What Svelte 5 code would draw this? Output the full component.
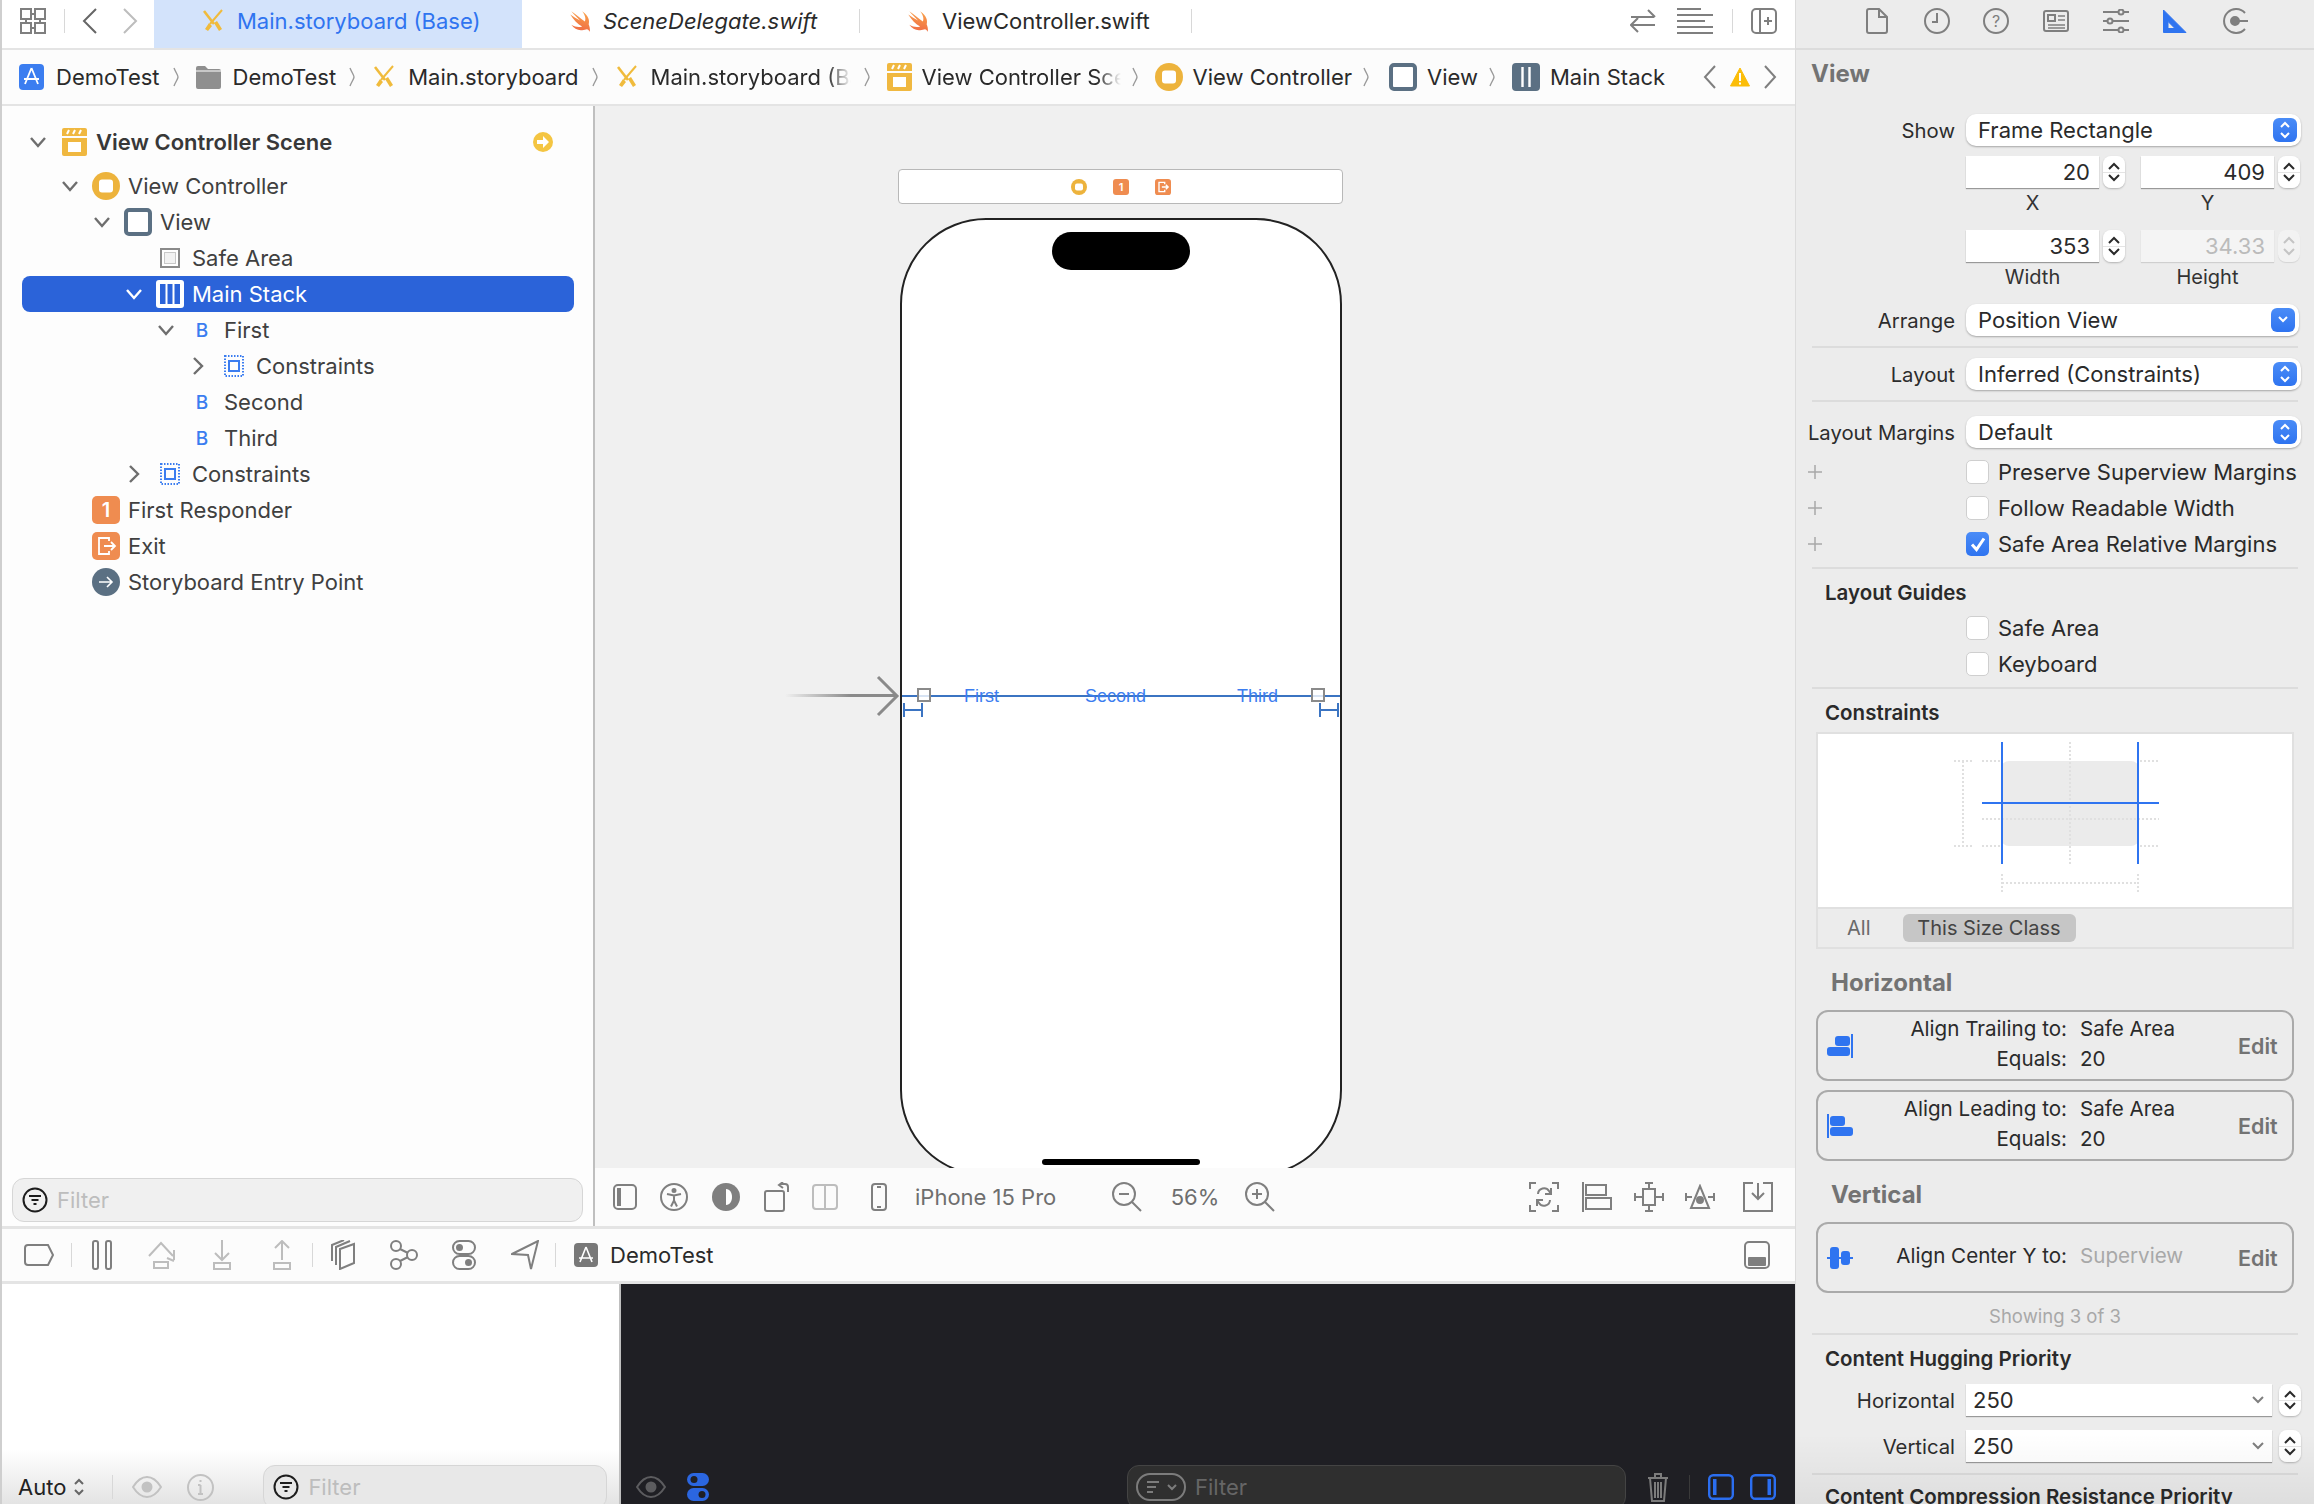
<script>
  const rows = [
    { l: 0, ch: 'd', ic: 'scene', t: 'View Controller Scene', bold: true },
    { l: 1, ch: 'd', ic: 'vc', t: 'View Controller' },
    { l: 2, ch: 'd', ic: 'view', t: 'View' },
    { l: 3, ch: '', ic: 'safe', t: 'Safe Area' },
    { l: 3, ch: 'd', ic: 'stack', t: 'Main Stack', sel: true },
    { l: 4, ch: 'd', ic: 'b', t: 'First' },
    { l: 5, ch: 'r', ic: 'cons', t: 'Constraints' },
    { l: 4, ch: '', ic: 'b', t: 'Second' },
    { l: 4, ch: '', ic: 'b', t: 'Third' },
    { l: 3, ch: 'r', ic: 'cons', t: 'Constraints' },
    { l: 1, ch: '', ic: 'one', t: 'First Responder' },
    { l: 1, ch: '', ic: 'exit', t: 'Exit' },
    { l: 1, ch: '', ic: 'entry', t: 'Storyboard Entry Point' }
  ];
</script>

{#snippet sb()}
  <svg width="24" height="24" viewBox="0 0 24 24" fill="none"><path d="M3 2 L13 15" stroke="#f0bb3c" stroke-width="2.6"/><path d="M21 1 L9 15" stroke="#f0bb3c" stroke-width="2"/><path d="M8 14 L4 20 L7 22 L11 17Z M13 14 L18 22 L21 20 L16 12Z" fill="#f0bb3c"/></svg>
{/snippet}
{#snippet swift()}
  <svg width="26" height="26" viewBox="0 0 24 24"><defs><linearGradient id="sw" x1="0.6" y1="0" x2="0.4" y2="1"><stop offset="0" stop-color="#f9a24a"/><stop offset="1" stop-color="#ef6a45"/></linearGradient></defs><path fill="url(#sw)" d="M20 15c1-3 .2-8-6-12 3 4 3.5 7 2.5 9.5C13 10 8 6 4 3c2.5 3 5.5 6 8 8.5C9 10 6 8 3 6c3 5 7 9 11 11-3 1-6.5.5-10-1.5 2.5 3.5 6 5.5 10 5 3-.3 4.5-2 6 0 .8 1 1 1.5 1 1.5 .5-2.5-.2-5-1-7z"/></svg>
{/snippet}
{#snippet sep()}
  <svg class="csep" width="6" height="20" viewBox="0 0 6 20" fill="none"><path d="M1 1 C3 6 5 8 5 10 C5 12 3 14 1 19" stroke="#9a9a9a" stroke-width="1.4"/></svg>
{/snippet}
{#snippet scene()}
  <svg width="25" height="28" viewBox="0 0 25 28"><path d="M2 0h21a2 2 0 0 1 2 2v6H0V2a2 2 0 0 1 2-2z" fill="#f0b840"/><path d="M5 6l2-4M11 6l2-4M17 6l2-4" stroke="#fff" stroke-width="2"/><path d="M0 10h25v16a2 2 0 0 1-2 2H2a2 2 0 0 1-2-2z" fill="#f0b840"/><rect x="6" y="14" width="13" height="10" fill="#fff"/></svg>
{/snippet}
{#snippet vc()}
  <svg width="28" height="28" viewBox="0 0 28 28"><circle cx="14" cy="14" r="14" fill="#edb33c"/><rect x="7" y="7.5" width="14" height="13" rx="3" fill="#fff"/></svg>
{/snippet}
{#snippet view()}
  <svg width="28" height="28" viewBox="0 0 28 28"><rect x="2" y="2" width="24" height="24" rx="3" fill="#fff" stroke="#5b7083" stroke-width="4"/></svg>
{/snippet}
{#snippet stack(c)}
  <svg width="28" height="28" viewBox="0 0 28 28"><rect x="2" y="2" width="24" height="24" rx="2" fill="#fff" stroke={c} stroke-width="4"/><rect x="4" y="4" width="20" height="20" fill={c}/><path d="M10.5 4v20M17.5 4v20" stroke="#fff" stroke-width="2.4"/></svg>
{/snippet}
{#snippet plus()}
  <span class="plus"><svg width="14" height="14" viewBox="0 0 14 14" fill="none" stroke="#a8a8a8" stroke-width="1.500"><path d="M7 0v14M0 7h14"/></svg></span>
{/snippet}
{#snippet step(dis = false)}
  <div class="stp" class:sdis={dis}>
    <svg width="14" height="10" viewBox="0 0 14 10" fill="none" stroke-width="2"><path d="M2 8l5-5 5 5"/></svg>
    <svg width="14" height="10" viewBox="0 0 14 10" fill="none" stroke-width="2"><path d="M2 2l5 5 5-5"/></svg>
  </div>
{/snippet}

<div class="app">
  <div class="main">
    <div class="tabs">
      <div class="cell"><svg width="26" height="26" viewBox="0 0 26 26" class="ic" stroke-width="1.6"><rect x="1" y="1" width="10" height="10"/><rect x="15" y="1" width="10" height="10"/><rect x="1" y="15" width="10" height="10"/><rect x="15" y="15" width="10" height="10"/><path d="M6 11v4M20 11v4M11 6h4M11 20h4"/></svg></div>
      <div class="vs"></div>
      <div class="cell"><svg width="16" height="26" viewBox="0 0 16 26" class="ic dark"><path d="M14 1L2 13l12 12"/></svg></div>
      <div class="cell"><svg width="16" height="26" viewBox="0 0 16 26" class="ic lite"><path d="M2 1l12 12L2 25"/></svg></div>
      <div></div>
      <div class="tab active">{@render sb()}<span>Main.storyboard (Base)</span></div>
      <div class="tab t2">{@render swift()}<i>SceneDelegate.swift</i></div>
      <div class="vs"></div>
      <div class="tab t3">{@render swift()}<span>ViewController.swift</span></div>
      <div class="vs"></div>
      <div></div>
      <div class="cell"><svg width="26" height="26" viewBox="0 0 26 26" class="ic"><path d="M1 9h23M18 2l7 7M25 17H2M8 10l-7 7 7 7"/></svg></div>
      <div class="cell"><svg width="36" height="26" viewBox="0 0 36 26" class="ic"><path d="M0 1h24M0 7h36M0 13h28M0 19h36M0 25h36"/></svg></div>
      <div></div>
      <div class="vs"></div>
      <div class="cell"><svg width="26" height="26" viewBox="0 0 26 26" class="ic"><rect x="1" y="1" width="24" height="24" rx="4"/><path d="M9 1v24M17 9v8M13 13h8"/></svg></div>
    </div>

    <div class="crumbs">
      <div class="crumb"><svg width="25" height="26" viewBox="0 0 25 26"><rect width="25" height="26" rx="4" fill="#3b7df0"/><path d="M12.5 4L6 20M12.5 4L19 20M5 15h15" stroke="#fff" stroke-width="1.8" fill="none"/></svg><span>DemoTest</span>{@render sep()}</div>
      <div class="crumb"><svg width="25" height="24" viewBox="0 0 25 24"><path d="M0 3a2 2 0 0 1 2-2h7l3 3h11a2 2 0 0 1 2 2v16a2 2 0 0 1-2 2H2a2 2 0 0 1-2-2z" fill="#8f8f8f"/><path d="M0 6h25" stroke="#fff"/></svg><span>DemoTest</span>{@render sep()}</div>
      <div class="crumb">{@render sb()}<span>Main.storyboard</span>{@render sep()}</div>
      <div class="crumb">{@render sb()}<span class="fade f1">Main.storyboard (Base)</span>{@render sep()}</div>
      <div class="crumb c2">{@render scene()}<span class="fade f2">View Controller Scene</span>{@render sep()}</div>
      <div class="crumb c2 c3">{@render vc()}<span>View Controller</span>{@render sep()}</div>
      <div class="crumb c2">{@render view()}<span>View</span>{@render sep()}</div>
      <div class="crumb c2">{@render stack('#5b7083')}<span>Main Stack</span></div>
      <div class="cnav">
        <svg width="14" height="24" viewBox="0 0 14 24" class="ic"><path d="M12 1L2 12l10 11"/></svg>
        <svg width="20" height="20" viewBox="0 0 20 20"><path d="M10 1L19.500 19H.5z" fill="#fbbd08" stroke="#fbbd08" stroke-linejoin="round"/><path d="M10 6v8M10 15.500v2" stroke="#fff" stroke-width="2"/></svg>
        <svg width="14" height="24" viewBox="0 0 14 24" class="ic"><path d="M2 1l10 11L2 23"/></svg>
      </div>
    </div>

    <div class="mid">
      <div class="nav">
        <div class="tree">
          {#each rows as r}
            <div class="row" class:sel={r.sel} class:bold={r.bold} class:l1={r.l === 1} class:l2={r.l === 2} class:l3={r.l === 3} class:l4={r.l === 4} class:l5={r.l === 5}>
              <div class="chev">
                {#if r.ch === 'd'}<svg width="16" height="12" viewBox="0 0 16 12" class="ic chevron"><path d="M1 2l7 8 7-8"/></svg>{/if}
                {#if r.ch === 'r'}<svg width="12" height="18" viewBox="0 0 12 18" class="ic chevron"><path d="M2 1l8 8-8 8"/></svg>{/if}
              </div>
              <div class="ricon">
                {#if r.ic === 'scene'}{@render scene()}
                {:else if r.ic === 'vc'}{@render vc()}
                {:else if r.ic === 'view'}{@render view()}
                {:else if r.ic === 'safe'}<svg width="20" height="20" viewBox="0 0 20 20"><rect x="1" y="1" width="18" height="18" fill="#fff" stroke="#8a8a8a" stroke-width="2"/><rect x="4.500" y="4.500" width="11" height="11" fill="#f2f2f2" stroke="#999" stroke-dasharray="1 1"/></svg>
                {:else if r.ic === 'stack'}<svg width="28" height="28" viewBox="0 0 28 28"><rect width="28" height="28" rx="3" fill="#fff"/><rect x="4" y="4" width="20" height="20" fill="#2b63d9"/><path d="M10.500 4v20M17.500 4v20" stroke="#fff" stroke-width="2"/></svg>
                {:else if r.ic === 'b'}<span class="bb">B</span>
                {:else if r.ic === 'cons'}<svg width="20" height="22" viewBox="0 0 20 22" fill="none"><rect x="1" y="1" width="18" height="20" stroke="#3b7df0" stroke-width="2" stroke-dasharray="1.500 1.500"/><rect x="5" y="6" width="10" height="10" stroke="#3b7df0" stroke-width="2"/></svg>
                {:else if r.ic === 'one'}<div class="sq">1</div>
                {:else if r.ic === 'exit'}<svg width="28" height="28" viewBox="0 0 28 28" fill="none"><rect width="28" height="28" rx="5" fill="#ef8c50"/><path d="M17 9V6H7v16h10v-3M12 14h11M19 10l4 4-4 4" stroke="#fff" stroke-width="1.800"/></svg>
                {:else if r.ic === 'entry'}<svg width="28" height="28" viewBox="0 0 28 28" fill="none"><circle cx="14" cy="14" r="14" fill="#5b7083"/><path d="M7 14h13M15 9l5 5-5 5" stroke="#fff" stroke-width="1.600"/></svg>
                {/if}
              </div>
              <span class="rlabel">{r.t}</span>
              {#if r.ic === 'scene'}
                <svg class="goto" width="20" height="20" viewBox="0 0 20 20"><circle cx="10" cy="10" r="10" fill="#f4c542"/><path d="M4 8h6V4l6 6-6 6v-4H4z" fill="#fff"/></svg>
              {/if}
            </div>
          {/each}
        </div>
        <div class="filterwrap">
          <div class="filter">
            <svg width="26" height="26" viewBox="0 0 26 26" fill="none" stroke="#1d1d1d" stroke-width="2"><circle cx="13" cy="13" r="11.500"/><path d="M7 9h12M9.500 13h7M11.500 17h3"/></svg>
            <span>Filter</span>
          </div>
        </div>
      </div>

      <div class="center">
        <div class="canvas">
          <div class="dock">
            <svg width="16" height="16" viewBox="0 0 16 16"><circle cx="8" cy="8" r="8" fill="#edb33c"/><rect x="4" y="4.500" width="8" height="7" rx="2" fill="#fff"/></svg>
            <div class="sq small">1</div>
            <svg width="16" height="16" viewBox="0 0 28 28" fill="none"><rect width="28" height="28" rx="5" fill="#ef8c50"/><path d="M17 9V6H7v16h10v-3M12 14h11M19 10l4 4-4 4" stroke="#fff" stroke-width="2.400"/></svg>
          </div>
          <div class="entry"></div>
          <svg class="head" width="24" height="42" viewBox="0 0 24 42" fill="none"><path d="M2 2l19 19L2 40" stroke="#8a8a8a" stroke-width="3"/></svg>
          <div class="phone">
            <div class="island"></div>
            <div class="stackline">
              <span>First</span><span class="mid2">Second</span><span>Third</span>
              <i class="handle hl"></i><i class="handle hr"></i>
              <svg class="beam bl" width="20" height="14" viewBox="0 0 20 14" fill="none" stroke="#3b74c2" stroke-width="2"><path d="M1 0v14M19 0v14M1 7h18"/></svg>
              <svg class="beam br" width="20" height="14" viewBox="0 0 20 14" fill="none" stroke="#3b74c2" stroke-width="2"><path d="M1 0v14M19 0v14M1 7h18"/></svg>
            </div>
            <div class="home"></div>
          </div>
        </div>
        <div class="cbar">
          <div class="cell"><svg width="24" height="26" viewBox="0 0 24 26" class="ic"><rect x="1" y="1" width="22" height="24" rx="4"/><rect x="4" y="4" width="4" height="18" fill="#7f7f7f" stroke="none"/></svg></div>
          <div class="cell"><svg width="28" height="28" viewBox="0 0 28 28" class="ic" stroke-width="1.600"><circle cx="14" cy="14" r="13"/><circle cx="14" cy="7.500" r="1.500" fill="#7f7f7f"/><path d="M7 11l7 1.500L21 11M14 12.500v5M14 17.500l-3 6M14 17.500l3 6"/></svg></div>
          <div class="cell"><svg width="28" height="28" viewBox="0 0 28 28"><circle cx="14" cy="14" r="14" fill="#7f7f7f"/><path d="M14 6c4 0 6 4 6 8s-2 8-6 8z" fill="#fff"/></svg></div>
          <div class="cell"><svg width="28" height="30" viewBox="0 0 28 30" class="ic"><rect x="1" y="9" width="19" height="20" rx="2"/><path d="M24 10V5a3 3 0 0 0-3-3h-5M19 0l-4 3 4 3"/></svg></div>
          <div class="cell"><svg width="26" height="26" viewBox="0 0 26 26" class="ic lite"><rect x="1" y="1" width="24" height="24" rx="3"/><path d="M13 1v24"/></svg></div>
          <div class="cell"><svg width="16" height="28" viewBox="0 0 16 28" class="ic"><rect x="1" y="1" width="14" height="26" rx="3"/><path d="M6 4h4M6 24h4"/></svg></div>
          <div class="device">iPhone 15 Pro</div>
          <div class="cell"><svg width="30" height="30" viewBox="0 0 30 30" class="ic"><circle cx="12" cy="12" r="11"/><path d="M20 20l9 9M7 12h10"/></svg></div>
          <div class="cell zoomv">56%</div>
          <div class="cell"><svg width="30" height="30" viewBox="0 0 30 30" class="ic"><circle cx="12" cy="12" r="11"/><path d="M20 20l9 9M7 12h10M12 7v10"/></svg></div>
          <div></div>
          <div class="cell"><svg width="30" height="30" viewBox="0 0 30 30" class="ic"><path d="M1 7V1h6M23 1h6v6M1 23v6h6M29 23v6h-6M9 12a6 6 0 0 1 11-3l2 3M21 18a6 6 0 0 1-11 3l-2-3M22 6v6h-6M8 24v-6h6"/></svg></div>
          <div class="cell"><svg width="30" height="30" viewBox="0 0 30 30" class="ic"><path d="M1 0v30M4 3h20v10H4zM4 16h25v11H4z"/></svg></div>
          <div class="cell"><svg width="30" height="30" viewBox="0 0 30 30" class="ic"><rect x="9" y="7" width="12" height="16"/><path d="M15 0v7M11 1h8M15 23v7M11 29h8M1 11v8M1 15h8M29 11v8M21 15h8"/></svg></div>
          <div class="cell"><svg width="30" height="26" viewBox="0 0 30 26" class="ic"><path d="M15 2L6 24h18zM1 9v8M1 13h6M29 9v8M23 13h6"/><circle cx="15" cy="16" r="3" fill="#7f7f7f"/></svg></div>
          <div class="cell"><svg width="30" height="30" viewBox="0 0 30 30" class="ic"><path d="M10 1H1v28h28V1h-9M15 1v15M9 11l6 6 6-6"/></svg></div>
        </div>
      </div>
    </div>

    <div class="dbar">
      <div class="cell first"><svg width="30" height="22" viewBox="0 0 30 22" class="ic"><path d="M4 1h20l5 10-5 10H4a3 3 0 0 1-3-3V4a3 3 0 0 1 3-3z"/></svg></div>
      <div class="vs"></div>
      <div class="cell"><svg width="20" height="30" viewBox="0 0 20 30" class="ic"><rect x="1" y="1" width="5" height="28" rx="2"/><rect x="14" y="1" width="5" height="28" rx="2"/></svg></div>
      <div class="cell"><svg width="28" height="28" viewBox="0 0 28 28" class="ic lite"><path d="M1 15L13 2l12 13M26 9v10M19 17l7 3M6 21h14v6H6z"/></svg></div>
      <div class="cell"><svg width="20" height="30" viewBox="0 0 20 30" class="ic lite"><path d="M10 0v19M3 13l7 7 7-7M2 23h16v6H2z"/></svg></div>
      <div class="cell"><svg width="20" height="30" viewBox="0 0 20 30" class="ic lite"><path d="M10 20V1M3 8l7-7 7 7M2 23h16v6H2z"/></svg></div>
      <div class="vs"></div>
      <div class="cell"><svg width="24" height="30" viewBox="0 0 24 30" class="ic" stroke-width="1.600"><path d="M9 9l14-5v19L9 29zM5 25V7l14-6M1 21V5l12-5"/></svg></div>
      <div class="cell"><svg width="28" height="30" viewBox="0 0 28 30" class="ic"><circle cx="6" cy="6" r="5"/><circle cx="22" cy="15" r="5"/><circle cx="6" cy="24" r="5"/><path d="M10 9l8 4M10 21l8-4"/></svg></div>
      <div class="cell"><svg width="24" height="30" viewBox="0 0 24 30" class="ic"><rect x="1" y="1" width="22" height="13" rx="6.500"/><rect x="1" y="16" width="22" height="13" rx="6.500"/><circle cx="7.500" cy="7.500" r="2.500" fill="#7f7f7f"/><circle cx="16.500" cy="22.500" r="2.500" fill="#7f7f7f"/></svg></div>
      <div class="cell"><svg width="28" height="30" viewBox="0 0 28 30" class="ic"><path d="M1 14L27 1l-7 28-3-14z"/></svg></div>
      <div class="vs"></div>
      <div class="dapp"><svg width="24" height="24" viewBox="0 0 24 24"><rect width="24" height="24" rx="4" fill="#787878"/><path d="M12 4L6 19M12 4l6 15M5 15h14" stroke="#fff" stroke-width="1.600" fill="none"/></svg><span>DemoTest</span></div>
      <div class="cell"><svg width="26" height="28" viewBox="0 0 26 28" class="ic"><rect x="1" y="1" width="24" height="26" rx="4"/><rect x="4" y="16" width="18" height="9" rx="1" fill="#7f7f7f" stroke="none"/></svg></div>
    </div>

    <div class="bottom">
      <div class="vars">
        <div class="vbar">
          <span class="auto">Auto</span>
          <svg width="10" height="18" viewBox="0 0 10 18" class="ic dark"><path d="M1 6l4-4 4 4M1 12l4 4 4-4"/></svg>
          <div class="vs v1"></div>
          <svg class="eye" width="30" height="22" viewBox="0 0 30 22" fill="none" stroke="#c2c2c2" stroke-width="2"><path d="M1 11C6 3 11 1 15 1s9 2 14 10c-5 8-10 10-14 10S6 19 1 11z"/><circle cx="15" cy="11" r="4.500" fill="#c2c2c2"/></svg>
          <svg class="info" width="27" height="27" viewBox="0 0 27 27" fill="none" stroke="#c2c2c2" stroke-width="2"><circle cx="13.500" cy="13.500" r="12.500"/><path d="M13.500 11v9M11 20h5M11 11h2.500M13.500 6v2"/></svg>
          <div class="filter f2b">
            <svg width="26" height="26" viewBox="0 0 26 26" fill="none" stroke="#1d1d1d" stroke-width="2"><circle cx="13" cy="13" r="11.500"/><path d="M7 9h12M9.500 13h7M11.500 17h3"/></svg>
            <span>Filter</span>
          </div>
        </div>
      </div>
      <div class="console">
        <div class="cobar">
          <svg width="30" height="22" viewBox="0 0 30 22" fill="none" stroke="#5c5c5f" stroke-width="2"><path d="M1 11C6 3 11 1 15 1s9 2 14 10c-5 8-10 10-14 10S6 19 1 11z"/><circle cx="15" cy="11" r="4.500" fill="#5c5c5f"/></svg>
          <svg class="tog" width="22" height="28" viewBox="0 0 22 28"><rect width="22" height="13" rx="6.500" fill="#2b66e0"/><rect y="15" width="22" height="13" rx="6.500" fill="#2b66e0"/><circle cx="7" cy="6.500" r="3.500" fill="#1f1f24"/><circle cx="15" cy="21.500" r="3.500" fill="#1f1f24"/></svg>
          <div class="dfilter">
            <svg width="50" height="28" viewBox="0 0 50 28" fill="none" stroke="#7c7c7c" stroke-width="2"><rect x="1" y="1" width="48" height="26" rx="13"/><path d="M11 9h12M11 14h9M11 19h6M32 12l4 4 4-4"/></svg>
            <span>Filter</span>
          </div>
          <svg class="trash" width="22" height="30" viewBox="0 0 22 30" fill="none" stroke="#7c7c7c" stroke-width="2"><path d="M1 6h20M8 6V2h6v4M3 6l2 23h12l2-23M8 10v16M11 10v16M14 10v16"/></svg>
          <div class="vs dv"></div>
          <svg class="pl" width="26" height="26" viewBox="0 0 26 26" fill="none" stroke="#2b6ef0" stroke-width="2.400"><rect x="1.200" y="1.200" width="23.600" height="23.600" rx="4"/><rect x="5" y="5" width="3.500" height="16" fill="#2b6ef0" stroke="none"/></svg>
          <svg class="pr" width="26" height="26" viewBox="0 0 26 26" fill="none" stroke="#2b6ef0" stroke-width="2.400"><rect x="1.200" y="1.200" width="23.600" height="23.600" rx="4"/><rect x="17.500" y="5" width="3.500" height="16" fill="#2b6ef0" stroke="none"/></svg>
        </div>
      </div>
    </div>
  </div>

  <div class="insp">
    <div class="ibar">
      <div class="icell"><svg width="22" height="26" viewBox="0 0 22 26" class="ic"><path d="M3 1h10l8 8v14a2 2 0 0 1-2 2H3a2 2 0 0 1-2-2V3a2 2 0 0 1 2-2zM13 1v8h8"/></svg></div>
      <div class="icell"><svg width="26" height="26" viewBox="0 0 26 26" class="ic"><circle cx="13" cy="13" r="12"/><path d="M13 5v9H8"/></svg></div>
      <div class="icell"><svg width="26" height="26" viewBox="0 0 26 26" class="ic"><circle cx="13" cy="13" r="12"/><text x="13" y="18.500" text-anchor="middle" class="qm">?</text></svg></div>
      <div class="icell"><svg width="26" height="22" viewBox="0 0 26 22" class="ic"><rect x="1" y="1" width="24" height="20" rx="2"/><rect x="5" y="5" width="7" height="6"/><path d="M15 6h7M15 10h7M5 15h17M5 18h17" stroke-width="1.500"/></svg></div>
      <div class="icell"><svg width="26" height="24" viewBox="0 0 26 24" class="ic" stroke-width="1.500"><path d="M0 3h15M21 3h5M0 12h4M10 12h16M0 21h15M21 21h5"/><circle cx="18" cy="3" r="2.500"/><circle cx="7" cy="12" r="2.500"/><circle cx="18" cy="21" r="2.500"/></svg></div>
      <div class="icell"><svg width="26" height="26" viewBox="0 0 26 26"><path d="M1.500 2v22.500H24z M6 13.500V20.500H13z" fill="#2f74f0" fill-rule="evenodd" stroke="#2f74f0" stroke-width="1"/></svg></div>
      <div class="icell"><svg width="26" height="26" viewBox="0 0 26 26" class="ic"><path d="M23 5A12 12 0 1 0 23 21M14 13h12"/><circle cx="13" cy="13" r="4" fill="#7f7f7f"/></svg></div>
    </div>

    <div class="ibody">
      <div class="ititle">View</div>

      <div class="fr mt23"><label>Show</label><div class="pop"><span>Frame Rectangle</span><b class="bt"><svg width="12" height="20" viewBox="0 0 12 20" class="wh"><path d="M2 7l4-4 4 4M2 13l4 4 4-4"/></svg></b></div></div>

      <div class="nums mt10">
        <div class="nf"><em>20</em></div>{@render step()}<div class="nf"><em>409</em></div>{@render step()}
        <div class="cap">X</div><div></div><div class="cap">Y</div><div></div>
        <div class="nf"><em>353</em></div>{@render step()}<div class="nf dis"><em>34.33</em></div>{@render step(true)}
        <div class="cap">Width</div><div></div><div class="cap">Height</div><div></div>
      </div>

      <div class="fr"><label>Arrange</label><div class="pop narrow"><span>Position View</span><b class="bt"><svg width="12" height="10" viewBox="0 0 12 10" class="wh"><path d="M2 2l4 4 4-4"/></svg></b></div></div>
      <hr class="mt10" />
      <div class="fr mt10"><label>Layout</label><div class="pop"><span>Inferred (Constraints)</span><b class="bt"><svg width="12" height="20" viewBox="0 0 12 20" class="wh"><path d="M2 7l4-4 4 4M2 13l4 4 4-4"/></svg></b></div></div>
      <hr class="mt10" />
      <div class="fr mt14"><label>Layout Margins</label><div class="pop"><span>Default</span><b class="bt"><svg width="12" height="20" viewBox="0 0 12 20" class="wh"><path d="M2 7l4-4 4 4M2 13l4 4 4-4"/></svg></b></div></div>

      <div class="ck mt12">{@render plus()}<i class="box"></i><span>Preserve Superview Margins</span></div>
      <div class="ck mt12">{@render plus()}<i class="box"></i><span>Follow Readable Width</span></div>
      <div class="ck mt12">{@render plus()}<i class="box on"><svg width="24" height="24" viewBox="0 0 24 24" fill="none" stroke="#fff" stroke-width="3"><path d="M6 12.500l4.500 5L18 6.500"/></svg></i><span>Safe Area Relative Margins</span></div>
      <hr class="mt11" />
      <div class="st mt11">Layout Guides</div>
      <div class="ck mt10"><span class="plus"></span><i class="box"></i><span>Safe Area</span></div>
      <div class="ck mt12"><span class="plus"></span><i class="box"></i><span>Keyboard</span></div>
      <hr class="mt11" />
      <div class="st mt11">Constraints</div>

      <div class="cbox">
        <div class="diagram">
          <svg width="474" height="173" viewBox="1818 734 474 173" fill="none">
            <rect x="2001" y="761" width="138" height="85" rx="8" fill="#ebebeb"/>
            <g stroke="#e0e0e0" stroke-width="2" stroke-dasharray="2 2">
              <path d="M2070 742v122M1963 761v85M1954 761h18M1982 761h18M2140 761h19M1954 846h18M1982 846h18M2140 846h19M1982 819h177M2002 883h136M2002 874v18M2138 874v18"/>
            </g>
            <path d="M2002 742v122M2138 742v122M1982 803h177" stroke="#2f74f0" stroke-width="2"/>
          </svg>
        </div>
        <div class="ctabs"><span class="all">All</span><span class="pill">This Size Class</span></div>
      </div>

      <div class="gt mt21">Horizontal</div>
      <div class="card mt14">
        <svg class="cic" width="26" height="26" viewBox="0 0 26 26"><rect x="8" y="3" width="15" height="10" rx="3" fill="#2f74f0"/><rect y="14" width="23" height="9" rx="3" fill="#2f74f0"/><path d="M25 1v24" stroke="#2f74f0" stroke-width="2"/></svg>
        <span class="ck1">Align Trailing to:</span><span class="cv">Safe Area</span><span class="edit">Edit</span>
        <span class="ck1">Equals:</span><span class="cv">20</span>
      </div>
      <div class="card mt9">
        <svg class="cic" width="26" height="26" viewBox="0 0 26 26"><rect x="3" y="3" width="15" height="10" rx="3" fill="#2f74f0"/><rect x="3" y="14" width="23" height="9" rx="3" fill="#2f74f0"/><path d="M1 1v24" stroke="#2f74f0" stroke-width="2"/></svg>
        <span class="ck1">Align Leading to:</span><span class="cv">Safe Area</span><span class="edit">Edit</span>
        <span class="ck1">Equals:</span><span class="cv">20</span>
      </div>
      <div class="gt mt21">Vertical</div>
      <div class="card one mt14">
        <svg class="cic" width="26" height="24" viewBox="0 0 26 24"><rect x="3" y="1" width="9" height="22" rx="3" fill="#2f74f0"/><rect x="14" y="5" width="9" height="14" rx="3" fill="#2f74f0"/><path d="M0 12h26" stroke="#2f74f0" stroke-width="2"/></svg>
        <span class="ck1">Align Center Y to:</span><span class="cv grey">Superview</span><span class="edit">Edit</span>
      </div>
      <div class="showing">Showing 3 of 3</div>
      <hr class="mt4" />
      <div class="st mt11">Content Hugging Priority</div>
      <div class="fr mt12"><label>Horizontal</label><div class="combo"><span>250</span><svg width="12" height="8" viewBox="0 0 12 8" class="ic"><path d="M1 1l5 5 5-5"/></svg></div><span class="g7"></span>{@render step()}</div>
      <div class="fr mt14"><label>Vertical</label><div class="combo"><span>250</span><svg width="12" height="8" viewBox="0 0 12 8" class="ic"><path d="M1 1l5 5 5-5"/></svg></div><span class="g7"></span>{@render step()}</div>
      <hr class="mt11" />
      <div class="st mt9">Content Compression Resistance Priority</div>
    </div>
  </div>
</div>

<style>
  :global(body) { margin: 0; background: #fff; }
  .app { width: 2314px; height: 1504px; overflow: hidden; display: grid; grid-template-columns: 1795px 1px 518px; font-family: Inter, "Liberation Sans", sans-serif; font-size: 22px; color: #2a2a2a; position: relative; }
  .main { display: flex; flex-direction: column; border-left: 2px solid #cfcfcf; min-width: 0; height: 1504px; }
  .insp { grid-column: 3; background: #ececec; height: 1504px; border-left: 1px solid #dcdcdc; margin-left: -1px; position: relative; overflow: hidden; }
  .insp::after { content: ""; position: absolute; left: 0; right: 0; bottom: 0; height: 70px; background: linear-gradient(transparent, rgba(0,0,0,.06)); pointer-events: none; }
  .cell { display: flex; align-items: center; justify-content: center; min-width: 0; }
  .vs { width: 1px; height: 24px; background: #d8d8d8; align-self: center; }
  .ic { fill: none; stroke: #7f7f7f; stroke-width: 2; }
  .ic.dark { stroke: #666; }
  .ic.lite { stroke: #bdbdbd; }
  .chevron { stroke: #6e6e6e; stroke-width: 2.4; }
  .tabs { height: 48px; box-sizing: content-box; display: grid; grid-template-columns: 62px 1px 49px 32px 8px 368px 337px 1px 331px 1px 1fr 52px 52px 11px 1px 62px; background: #fff; border-bottom: 2px solid #e4e4e4; flex: none; }
  .tabs > .cell, .tabs > .tab { padding-bottom: 6px; box-sizing: border-box; }
  .tabs > .vs { align-self: start; margin-top: 9px; }
  .tab { display: flex; align-items: center; gap: 12px; padding-left: 47px; min-width: 0; overflow: hidden; white-space: nowrap; }
  .tab.t2 { padding-left: 45px; gap: 10px; }
  .tab.t3 { padding-left: 45px; gap: 11px; }
  .tab i { font-style: italic; }
  .tab.active { background: #d3e3fb; color: #2f74f0; }
  .crumbs { height: 54px; display: flex; align-items: center; padding-left: 17px; background: #fcfcfc; border-bottom: 2px solid #e4e4e4; flex: none; }
  .crumb { display: flex; align-items: center; gap: 12px; white-space: nowrap; margin-right: 17px; }
  .crumb.c2 { gap: 10px; }
  .crumb.c3 { margin-right: 20px; }
  .csep { margin-left: 1px; }
  .fade { overflow: hidden; display: block; }
  .f1 { width: 200px; -webkit-mask-image: linear-gradient(90deg, #000 88%, transparent); mask-image: linear-gradient(90deg, #000 88%, transparent); }
  .f2 { width: 199px; -webkit-mask-image: linear-gradient(90deg, #000 88%, transparent); mask-image: linear-gradient(90deg, #000 88%, transparent); }
  .cnav { margin-left: auto; margin-right: 18px; display: flex; align-items: center; gap: 13px; }
  .mid { height: 1120px; display: flex; flex: none; }
  .nav { width: 591px; flex: none; border-right: 2px solid #bfbfbf; box-sizing: content-box; background: #fdfdfd; display: flex; flex-direction: column; }
  .tree { flex: 1; padding: 18px 19px 0 20px; }
  .row { height: 36px; display: flex; align-items: center; color: #404040; position: relative; border-radius: 8px; white-space: nowrap; }
  .row.bold { font-weight: 600; color: #383838; margin-bottom: 8px; }
  .row.sel { background: #2b63d9; color: #fff; }
  .row.sel .chevron { stroke: #fff; }
  .l1 { padding-left: 32px; } .l2 { padding-left: 64px; } .l3 { padding-left: 96px; } .l4 { padding-left: 128px; } .l5 { padding-left: 160px; }
  .chev { width: 32px; display: flex; justify-content: center; flex: none; }
  .ricon { width: 32px; margin-left: 4px; margin-right: 6px; display: flex; justify-content: center; align-items: center; flex: none; }
  .bb { color: #3b7df0; font-size: 19px; font-weight: 500; }
  .sq { width: 28px; height: 28px; border-radius: 5px; background: #ef8c50; color: #fff; font-weight: 600; font-size: 20px; display: flex; align-items: center; justify-content: center; }
  .sq.small { width: 16px; height: 16px; font-size: 11px; border-radius: 3px; }
  .goto { position: absolute; right: 21px; top: 8px; }
  .filterwrap { padding: 0 10px 4px 10px; }
  .filter { height: 44px; box-sizing: border-box; border: 1.5px solid #d6d6d6; border-radius: 12px; background: #f0f0f0; display: flex; align-items: center; gap: 9px; padding-left: 9px; color: #bdbdbd; }
  .center { flex: 1; display: flex; flex-direction: column; min-width: 0; }
  .canvas { height: 1062px; background: #f0f0f0; position: relative; overflow: hidden; flex: none; }
  .dock { position: absolute; left: 303px; top: 63px; width: 445px; height: 35px; box-sizing: border-box; border: 1.5px solid #b8b8b8; border-radius: 4px; background: #fff; display: flex; align-items: center; justify-content: center; gap: 26px; padding-left: 1px; }
  .phone { position: absolute; left: 305px; top: 112px; width: 442px; height: 958px; box-sizing: border-box; border: 2px solid #222; border-radius: 86px; background: #fff; }
  .island { position: absolute; left: 150px; top: 12px; width: 138px; height: 38px; border-radius: 19px; background: #000; }
  .home { position: absolute; left: 140px; top: 939px; width: 158px; height: 6px; border-radius: 3px; background: #000; }
  .stackline { position: absolute; left: 0; right: 0; top: 462px; height: 28px; display: flex; justify-content: space-between; align-items: center; padding: 0 62px; font-family: "Liberation Sans", sans-serif; font-size: 18px; color: #3b7df0; }
  .stackline::before { content: ""; position: absolute; left: 0; right: 0; top: 13px; height: 2px; background: #3b74c2; }
  .stackline span { position: relative; }
  .mid2 { margin-right: 5px; }
  .handle { position: absolute; top: 6px; width: 14px; height: 14px; box-sizing: border-box; border: 2px solid #8a8a8a; background: rgba(255,255,255,.8); }
  .hl { left: 15px; } .hr { right: 15px; }
  .beam { position: absolute; top: 21px; }
  .bl { left: 1px; } .br { right: 1px; }
  .entry { position: absolute; left: 190px; top: 588px; width: 110px; height: 3px; background: linear-gradient(90deg, transparent, #8a8a8a 60%); }
  .head { position: absolute; left: 281px; top: 569px; }
  .cbar { height: 58px; background: #fbfbfb; display: grid; grid-template-columns: 59px 40px 64px 40px 54px 54px 184px 74px 62px 68px 1fr 62px 44px 60px 42px 74px; flex: none; }
  .device { align-self: center; padding-left: 9px; color: #6e6e6e; white-space: nowrap; }
  .zoomv { color: #6e6e6e; }
  .dbar { height: 52px; border-top: 3px solid #e4e4e4; border-bottom: 3px solid #e4e4e4; background: #fcfcfc; display: grid; grid-template-columns: 69px 1px 60px 60px 60px 60px 1px 60.5px 60.5px 60.5px 60.5px 1px 1fr 76px; flex: none; }
  .cell.first { padding-left: 4px; }
  .dapp { display: flex; align-items: center; gap: 12px; padding-left: 18px; color: #2a2a2a; }
  .bottom { flex: 1; display: flex; min-height: 0; }
  .vars { width: 617px; flex: none; border-right: 2px solid #bfbfbf; background: linear-gradient(#fff 0, #fff 75%, #e4e4e4 100%); display: flex; flex-direction: column; justify-content: flex-end; }
  .vbar { display: flex; align-items: center; height: 44px; margin-bottom: -5px; padding-left: 16px; }
  .auto { margin-right: 8px; color: #222; }
  .vs.v1 { margin-left: 28px; margin-right: 19px; }
  .info { margin-left: 25px; }
  .filter.f2b { width: 344px; flex: none; margin-left: 49px; height: 44px; background: #e8e8e8; }
  .console { flex: 1; background: #1f1f24; display: flex; flex-direction: column; justify-content: flex-end; min-width: 0; }
  .cobar { display: flex; align-items: center; height: 44px; margin-bottom: -5px; padding-left: 15px; }
  .tog { margin-left: 21px; }
  .dfilter { margin-left: 418px; width: 499px; flex: none; height: 44px; box-sizing: border-box; border: 1.5px solid #444; border-radius: 12px; background: #2f2f2f; display: flex; align-items: center; gap: 9px; padding-left: 8px; color: #666; }
  .trash { margin-left: 21px; }
  .vs.dv { margin-left: 20px; background: #3a3a3a; }
  .pl { margin-left: 18px; } .pr { margin-left: 16px; }
  .ibar { height: 48px; border-bottom: 2px solid #dcdcdc; display: flex; padding-left: 51px; }
  .icell { width: 59.700px; display: flex; align-items: center; justify-content: center; flex: none; padding-bottom: 6px; box-sizing: border-box; }
  .qm { font-size: 16px; font-family: Inter, sans-serif; fill: #7f7f7f; stroke: none; }
  .ibody { padding: 0 0 0 15px; }
  .ititle { height: 34px; margin-top: 7px; line-height: 34px; font-weight: 700; font-size: 24px; color: #737373; }
  .mt4 { margin-top: 4px; } .mt9 { margin-top: 9px; } .mt10 { margin-top: 10px; } .mt11 { margin-top: 11px; } .mt12 { margin-top: 12px; } .mt14 { margin-top: 14px; } .mt21 { margin-top: 21px; } .mt23 { margin-top: 23px; }
  .fr { display: flex; align-items: center; height: 32px; }
  label { width: 144px; flex: none; text-align: right; margin-right: 11px; white-space: nowrap; direction: rtl; color: #2c2c2c; font-size: 20.300px; }
  .pop { width: 335px; height: 32px; box-sizing: border-box; background: #fff; border-radius: 10px; box-shadow: 0 1px 2px rgba(0,0,0,.3); display: flex; align-items: center; justify-content: space-between; padding: 0 4px 0 12px; }
  .pop.narrow { width: 333px; }
  .bt { width: 24px; height: 24px; border-radius: 6px; background: linear-gradient(#4a8cf7, #2f74f0); display: flex; align-items: center; justify-content: center; }
  .wh { fill: none; stroke: #fff; stroke-width: 2; }
  .nums { display: grid; grid-template-columns: 133px 42px 133px 27px; margin-left: 155px; }
  .nf { height: 32px; background: #fff; box-shadow: 0 1px 1px rgba(0,0,0,.35); text-align: right; padding-right: 9px; line-height: 32px; box-sizing: border-box; }
  .nf em { font-style: normal; }
  .nf.dis { background: #f4f4f4; color: #bbb; box-shadow: 0 1px 1px rgba(0,0,0,.12); }
  .cap { text-align: center; height: 42px; line-height: 30px; font-size: 20px; color: #333; }
  .stp { width: 22px; height: 32px; margin-left: 4px; background: linear-gradient(#fff 0 49%, #e4e4e4 49% 52%, #fff 52%); border-radius: 8px; box-shadow: 0 1px 2px rgba(0,0,0,.25); display: flex; flex-direction: column; align-items: center; justify-content: center; gap: 2px; stroke: #2a2a2a; }
  .stp.sdis { background: #f2f2f2; stroke: #c4c4c4; box-shadow: 0 1px 1px rgba(0,0,0,.1); }
  hr { border: 0; height: 2px; background: #dcdcdc; width: 486px; margin-left: 1px; margin-bottom: 0; }
  .ck { display: flex; align-items: center; height: 24px; }
  .plus { width: 155px; flex: none; margin-left: -3px; margin-right: 3px; display: flex; align-items: center; }
  .box { width: 23px; height: 24px; box-sizing: border-box; border: 1px solid #cfcfcf; border-radius: 5px; background: #fff; margin-right: 9px; flex: none; display: block; }
  .box.on { background: linear-gradient(#4a8cf7, #2f74f0); border: 0; }
  .box svg { display: block; }
  .st { height: 26px; line-height: 26px; font-weight: 600; font-size: 20.500px; margin-left: 14px; color: #2a2a2a; white-space: nowrap; }
  .cbox { margin-top: 6px; margin-left: 5px; width: 478px; box-sizing: border-box; border: 2px solid #e0e0e0; }
  .diagram { background: #fff; height: 173px; border-bottom: 2px solid #e0e0e0; }
  .diagram svg { display: block; }
  .ctabs { height: 38px; display: flex; align-items: center; background: #ececec; color: #6a6a6a; font-size: 20px; }
  .all { margin-left: 29px; margin-right: 32px; }
  .pill { background: #c6c6c6; color: #444; height: 28px; width: 173px; line-height: 28px; text-align: center; border-radius: 6px; white-space: nowrap; }
  .gt { height: 26px; line-height: 26px; margin-left: 20px; font-weight: 700; font-size: 24px; color: #737373; }
  .card { margin-left: 5px; width: 478px; height: 71px; box-sizing: border-box; border: 2px solid #aaa; border-radius: 12px; display: grid; grid-template-columns: 36px 204px 171px auto; grid-template-rows: 30px 30px; align-content: center; padding-left: 9px; font-size: 20.600px; }
  .cic { grid-row: 1 / span 2; align-self: center; }
  .ck1 { text-align: right; white-space: nowrap; direction: rtl; grid-column: 2; unicode-bidi: plaintext; }
  .cv { padding-left: 13px; grid-column: 3; }
  .cv.grey { color: #a8a8a8; }
  .edit { grid-row: 1 / span 2; grid-column: 4; font-weight: 600; font-size: 21.500px; color: #737373; align-self: center; }
  .card.one { grid-template-rows: 30px; }
  .card.one .cic, .card.one .edit { grid-row: 1; }
  .showing { height: 26px; margin-top: 10px; line-height: 26px; text-align: center; width: 518px; margin-left: -15px; color: #a8a8a8; font-size: 18.500px; }
  .combo { width: 306px; height: 32px; box-sizing: border-box; background: #fff; box-shadow: 0 1px 1px rgba(0,0,0,.35); display: flex; align-items: center; justify-content: space-between; padding: 0 8px 0 7px; flex: none; }
  .g7 { width: 3px; flex: none; }
</style>
